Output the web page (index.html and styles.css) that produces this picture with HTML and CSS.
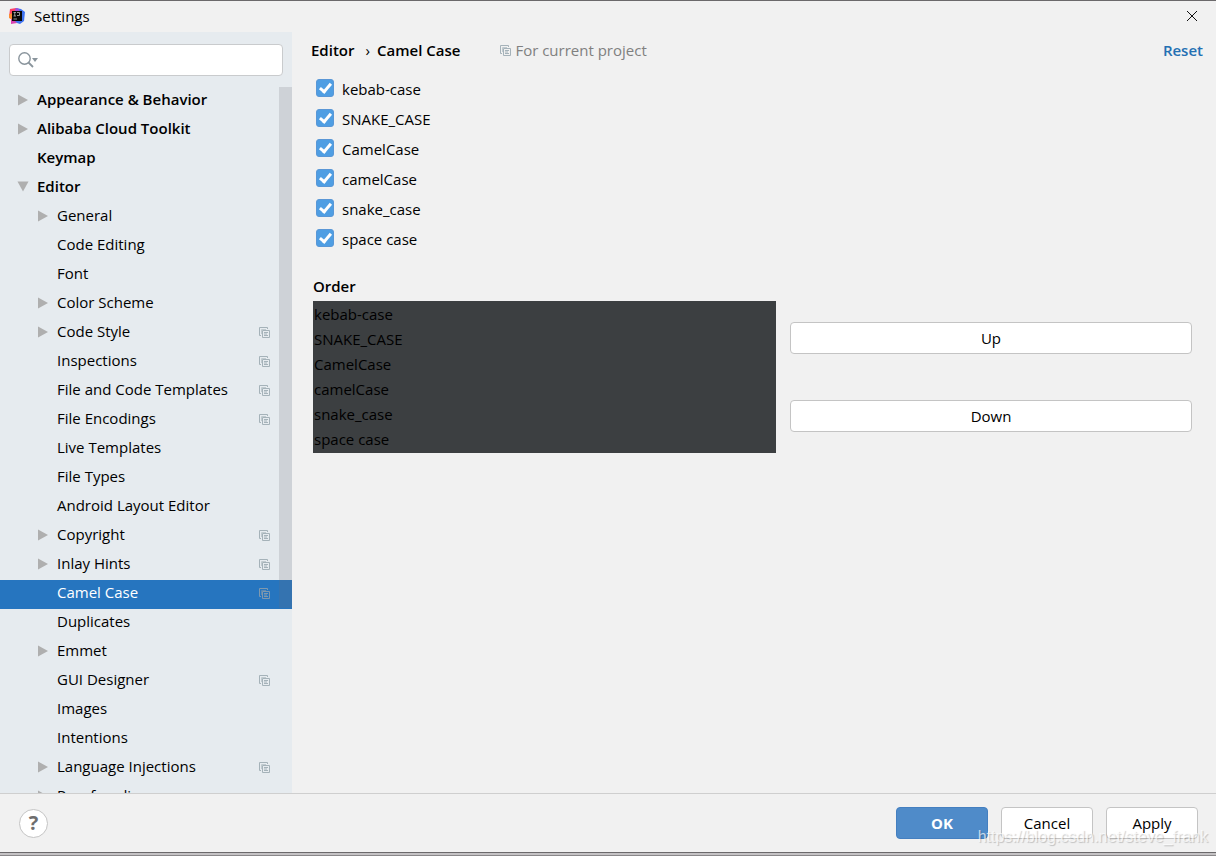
FILE: index.html
```
<!DOCTYPE html>
<html lang="en">
  <head>
    <meta charset="utf-8">
    <title>Settings</title>
    <link rel="stylesheet" href="styles.css">
  </head>
  <body>
    <svg class="symbols" aria-hidden="true">
      <symbol id="right" viewBox="0 0 12 12"><path d="M1 0.500L11 6L1 11.500z" fill="#afafaf"/></symbol>
      <symbol id="down" viewBox="0 0 12 12"><path d="M0.500 0.500H11.500L6 10.500z" fill="#afafaf"/></symbol>
      <symbol id="copy" viewBox="0 0 11 11">
        <path d="M8.500 2V0.500H0.500V8.500H2" fill="none" stroke="#a5b2b9"/>
        <path d="M2.500 7V2.500H7" fill="none" stroke="#c0cacf"/>
        <path d="M3.500 3.500H10.500V10.500H3.500z" fill="none" stroke="#a5b2b9"/>
        <path d="M5 5.500H9M5 8.500H9M5 7H8" fill="none" stroke="#a5b2b9"/>
      </symbol>
      <symbol id="copy-dim" viewBox="0 0 11 11">
        <path d="M8.500 2V0.500H0.500V8.500H2" fill="none" stroke="#7f99ae"/>
        <path d="M2.500 7V2.500H7" fill="none" stroke="#5c8ab2"/>
        <path d="M3.500 3.500H10.500V10.500H3.500z" fill="none" stroke="#7f99ae"/>
        <path d="M5 5.500H9M5 8.500H9M5 7H8" fill="none" stroke="#7f99ae"/>
      </symbol>
    </svg>

    <div class="dialog">
      <header class="titlebar">
        <svg class="logo" viewBox="0 0 16 16" aria-hidden="true">
          <path d="M1 1L7 0L9 8L4 13L0 9z" fill="#ff4065"/>
          <path d="M0 6L5 5L4 12L0 10z" fill="#fb8b32"/>
          <path d="M7 0L12 1L16 4L15 13L11 16L5 14z" fill="#3f72f0"/>
          <path d="M6 1L9 0L11 4L6 5z" fill="#a64ed8"/>
          <path d="M2 11L5 12L8 15L2 16z" fill="#d843b0"/>
          <path d="M3 3H13V13H3z" fill="#080808"/>
          <path d="M4.500 4.500H7M5.750 4.500V8M4.500 8H7M8 4.500H10.500V7.500H8M4.500 11H8" fill="none" stroke="#bbb" stroke-width="0.800"/>
        </svg>
        <span class="title">Settings</span>
        <button class="close" aria-label="Close">
          <svg viewBox="0 0 10 10"><path d="M0 0L10 10M10 0L0 10" stroke="#111"/></svg>
        </button>
      </header>

      <div class="content">
        <aside class="sidebar">
          <div class="search">
            <svg viewBox="0 0 20 16" aria-hidden="true">
              <circle cx="6.500" cy="6.500" r="5.700" fill="none" stroke="#89949c" stroke-width="1.400"/>
              <path d="M10.500 10.500L15 15" stroke="#89949c" stroke-width="1.800"/>
              <path d="M14 6H20L17 10z" fill="#89949c"/>
            </svg>
            <input type="text" aria-label="Search settings">
          </div>
          <nav class="tree">
            <a class="row top" href="#"><svg class="arrow"><use href="#right"/></svg>Appearance &amp; Behavior</a>
            <a class="row top" href="#"><svg class="arrow"><use href="#right"/></svg>Alibaba Cloud Toolkit</a>
            <a class="row top" href="#"><span class="arrow"></span>Keymap</a>
            <a class="row top" href="#"><svg class="arrow"><use href="#down"/></svg>Editor</a>
            <a class="row" href="#"><svg class="arrow"><use href="#right"/></svg>General</a>
            <a class="row" href="#"><span class="arrow"></span>Code Editing</a>
            <a class="row" href="#"><span class="arrow"></span>Font</a>
            <a class="row" href="#"><svg class="arrow"><use href="#right"/></svg>Color Scheme</a>
            <a class="row" href="#"><svg class="arrow"><use href="#right"/></svg>Code Style<svg class="copy"><use href="#copy"/></svg></a>
            <a class="row" href="#"><span class="arrow"></span>Inspections<svg class="copy"><use href="#copy"/></svg></a>
            <a class="row" href="#"><span class="arrow"></span>File and Code Templates<svg class="copy"><use href="#copy"/></svg></a>
            <a class="row" href="#"><span class="arrow"></span>File Encodings<svg class="copy"><use href="#copy"/></svg></a>
            <a class="row" href="#"><span class="arrow"></span>Live Templates</a>
            <a class="row" href="#"><span class="arrow"></span>File Types</a>
            <a class="row" href="#"><span class="arrow"></span>Android Layout Editor</a>
            <a class="row" href="#"><svg class="arrow"><use href="#right"/></svg>Copyright<svg class="copy"><use href="#copy"/></svg></a>
            <a class="row" href="#"><svg class="arrow"><use href="#right"/></svg>Inlay Hints<svg class="copy"><use href="#copy"/></svg></a>
            <a class="row selected" href="#"><span class="arrow"></span>Camel Case<svg class="copy"><use href="#copy-dim"/></svg></a>
            <a class="row" href="#"><span class="arrow"></span>Duplicates</a>
            <a class="row" href="#"><svg class="arrow"><use href="#right"/></svg>Emmet</a>
            <a class="row" href="#"><span class="arrow"></span>GUI Designer<svg class="copy"><use href="#copy"/></svg></a>
            <a class="row" href="#"><span class="arrow"></span>Images</a>
            <a class="row" href="#"><span class="arrow"></span>Intentions</a>
            <a class="row" href="#"><svg class="arrow"><use href="#right"/></svg>Language Injections<svg class="copy"><use href="#copy"/></svg></a>
            <a class="row" href="#"><svg class="arrow"><use href="#right"/></svg>Proofreading</a>
            <div class="scrollbar"></div>
          </nav>
        </aside>

        <main class="panel">
          <div class="heading">
            <b>Editor</b>
            <span class="sep">›</span>
            <b>Camel Case</b>
            <span class="scope"><svg class="copy"><use href="#copy"/></svg>For current project</span>
            <a class="reset" href="#">Reset</a>
          </div>

          <div class="checks">
            <label><input type="checkbox" checked><span>kebab-case</span></label>
            <label><input type="checkbox" checked><span>SNAKE_CASE</span></label>
            <label><input type="checkbox" checked><span>CamelCase</span></label>
            <label><input type="checkbox" checked><span>camelCase</span></label>
            <label><input type="checkbox" checked><span>snake_case</span></label>
            <label><input type="checkbox" checked><span>space case</span></label>
          </div>

          <h2>Order</h2>
          <div class="order">
            <ul>
              <li>kebab-case</li>
              <li>SNAKE_CASE</li>
              <li>CamelCase</li>
              <li>camelCase</li>
              <li>snake_case</li>
              <li>space case</li>
            </ul>
            <div class="move">
              <button class="btn">Up</button>
              <button class="btn">Down</button>
            </div>
          </div>
        </main>
      </div>

      <footer class="footer">
        <button class="help" aria-label="Help">?</button>
        <div class="actions">
          <button class="btn primary">OK</button>
          <button class="btn">Cancel</button>
          <button class="btn">Apply</button>
        </div>
        <span class="watermark">https://blog.csdn.net/steve_frank</span>
      </footer>
      <div class="edge"></div>
    </div>
  </body>
</html>
```
FILE: styles.css
```
* {
  box-sizing: border-box;
}
body {
  margin: 0;
  font-family: "Open Sans", "Noto Sans", sans-serif;
  font-size: 15px;
  line-height: 20px;
  color: #000;
  background: #f1f1f1;
}
button,
input {
  font: inherit;
}
a {
  color: inherit;
  text-decoration: none;
}
b {
  font-weight: 600;
}
.symbols {
  display: none;
}
.dialog {
  display: flex;
  flex-direction: column;
  height: 100vh;
  border-top: 1px solid #6b696b;
}

/* title bar */
.titlebar {
  display: flex;
  align-items: center;
  height: 31px;
  padding: 0 18px 2px 9px;
}
.logo {
  width: 16px;
  height: 16px;
  margin-right: 9px;
}
.close {
  margin-left: auto;
  padding: 0;
  width: 12px;
  height: 12px;
  border: none;
  background: none;
}
.close svg {
  display: block;
  width: 12px;
  height: 10px;
}

.content {
  display: flex;
  flex: 1;
  min-height: 0;
}

/* settings tree */
.sidebar {
  display: flex;
  flex-direction: column;
  flex: none;
  width: 292px;
  padding-top: 12px;
  background: #e6ebef;
}
.search {
  display: flex;
  align-items: center;
  height: 32px;
  margin: 0 9px 11px;
  padding-left: 8px;
  border: 1px solid #c9cbcd;
  border-radius: 4px;
  background: #fff;
}
.search svg {
  width: 20px;
  height: 16px;
}
.search input {
  flex: 1;
  min-width: 0;
  border: none;
  outline: none;
  background: none;
}
.tree {
  position: relative;
  flex: 1;
  min-height: 0;
  overflow: hidden;
}
.row {
  display: flex;
  align-items: center;
  height: 29px;
  padding: 0 21px 6px 37px;
}
.row.top {
  padding-left: 17px;
  font-weight: 600;
}
.arrow {
  width: 12px;
  height: 12px;
  margin: 2px 8px 0 0;
}
.copy {
  width: 11px;
  height: 11px;
}
.row .copy {
  margin: 4px 1px 0 auto;
}
.row.selected {
  color: #fff;
  background: #2675bf;
}
.scrollbar {
  position: absolute;
  top: 0;
  right: 0;
  width: 13px;
  height: 521px;
  background: rgba(110, 110, 120, 0.2);
}

/* right side */
.panel {
  flex: 1;
  padding: 8px 13px 0 19px;
}
.heading {
  display: flex;
  align-items: center;
}
.sep {
  margin: 0 7px 0 11px;
}
.scope {
  display: flex;
  align-items: center;
  gap: 4px;
  margin-left: 40px;
  color: #808080;
}
.reset {
  margin-left: auto;
  font-weight: 600;
  color: #2470b3;
}
.checks {
  margin: 14px 0 22px 5px;
}
.checks label {
  display: flex;
  align-items: center;
  gap: 8px;
  width: max-content;
  height: 30px;
}
.checks input {
  appearance: none;
  width: 18px;
  height: 18px;
  margin: 0 0 2px;
  border: 1px solid #5a97d6;
  border-radius: 3px;
  background: #4f9ee3;
}
.checks input:checked::before {
  content: "";
  display: block;
  width: 4px;
  height: 9px;
  margin: 1px auto 0;
  border: solid #fff;
  border-width: 0 3px 3px 0;
  transform: rotate(40deg);
}
h2 {
  margin: 0 0 5px 2px;
  font-size: 15px;
  font-weight: 600;
}
.order {
  display: grid;
  grid-template-columns: 463fr 402fr;
  gap: 14px;
  margin: 0 11px 0 2px;
}
.order ul {
  margin: 0;
  padding: 1px;
  list-style: none;
  background: #3c3f41;
}
.order li {
  line-height: 25px;
}
.move {
  display: flex;
  flex-direction: column;
  justify-content: center;
  gap: 46px;
}
.btn {
  height: 32px;
  padding: 0;
  border: 1px solid #c4c4c4;
  border-radius: 4px;
  color: #000;
  background: #fff;
}

/* bottom bar */
.footer {
  position: relative;
  display: flex;
  align-items: center;
  justify-content: space-between;
  height: 59px;
  padding: 0 18px 0 19px;
  border-top: 1px solid #cfcfcf;
}
.help {
  width: 29px;
  height: 29px;
  padding: 0;
  border: 1px solid #c4c4c4;
  border-radius: 50%;
  font-size: 20px;
  font-weight: bold;
  color: #6e6e6e;
  background: #fff;
}
.actions {
  display: flex;
  gap: 13px;
}
.actions .btn {
  width: 92px;
}
.btn.primary {
  border-color: #447fc0;
  font-weight: bold;
  color: #fff;
  background: #4f8bc9;
}
.watermark {
  position: absolute;
  right: 8px;
  bottom: 5px;
  font-family: "Liberation Sans", sans-serif;
  font-size: 16px;
  color: rgba(255, 255, 255, 0.7);
  text-shadow: 1px 1px 1px rgba(0, 0, 0, 0.2);
  pointer-events: none;
}
.edge {
  height: 4px;
  border-top: 1px solid #6b696b;
  border-bottom: 1px solid #8a888a;
  background: #c4c2c4;
}
```
